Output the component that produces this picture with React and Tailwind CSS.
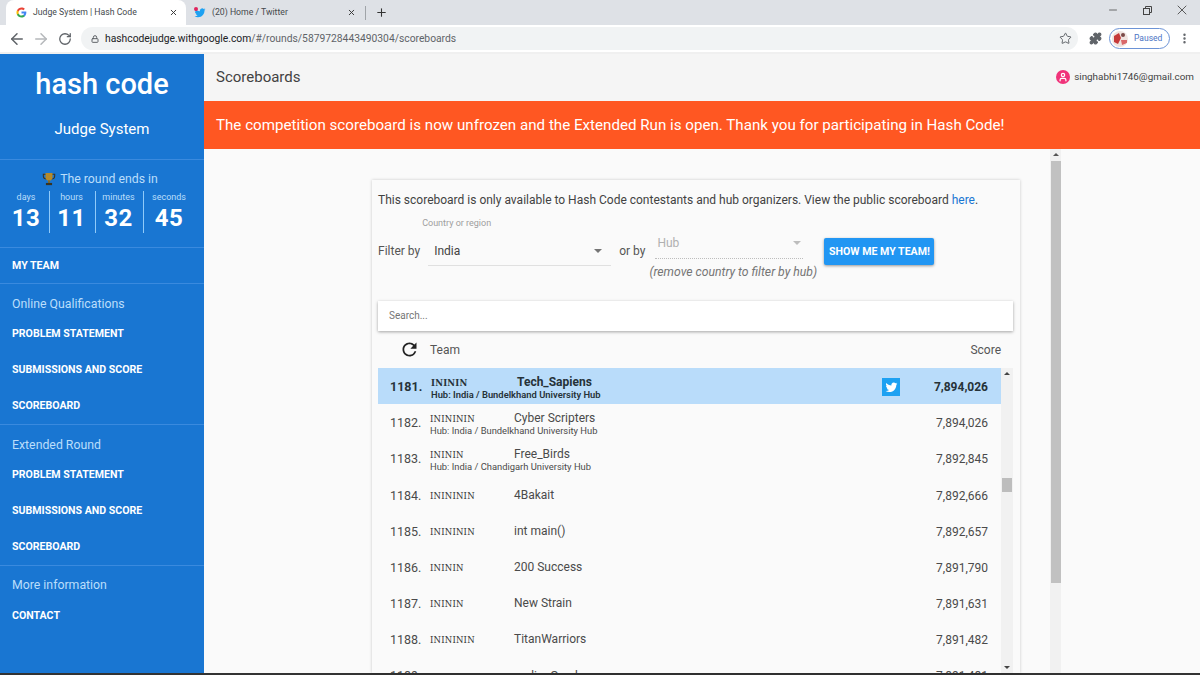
import { ArrowLeft, ArrowRight, RotateCw, Lock, Star, Puzzle, MoreVertical, X, Plus, Minus, User } from "lucide-react";

const font = { fontFamily: "Roboto, sans-serif" };

const rows = [
  { rank: "1181.", flags: "INININ", team: "Tech_Sapiens", hub: "Hub: India / Bundelkhand University Hub", score: "7,894,026", mine: true },
  { rank: "1182.", flags: "ININININ", team: "Cyber Scripters", hub: "Hub: India / Bundelkhand University Hub", score: "7,894,026" },
  { rank: "1183.", flags: "INININ", team: "Free_Birds", hub: "Hub: India / Chandigarh University Hub", score: "7,892,845" },
  { rank: "1184.", flags: "ININININ", team: "4Bakait", score: "7,892,666" },
  { rank: "1185.", flags: "ININININ", team: "int main()", score: "7,892,657" },
  { rank: "1186.", flags: "INININ", team: "200 Success", score: "7,891,790" },
  { rank: "1187.", flags: "INININ", team: "New Strain", score: "7,891,631" },
  { rank: "1188.", flags: "ININININ", team: "TitanWarriors", score: "7,891,482" },
  { rank: "1189.", flags: "", team: "codingGreek", score: "7,891,481" },
];

const countdown = [
  { label: "days", value: "13", w: "w-[47px]" },
  { label: "hours", value: "11", w: "w-[46px] pr-[2px]" },
  { label: "minutes", value: "32", w: "w-[48px] pr-[2px]" },
  { label: "seconds", value: "45", w: "w-[50px]" },
];

const TwitterBird = ({ className }) => (
  <svg viewBox="0 0 24 24" className={className} fill="currentColor">
    <path d="M23 4.900c-.8.4-1.700.6-2.600.7.900-.6 1.600-1.400 2-2.500-.9.5-1.900.9-2.900 1.100A4.500 4.500 0 0 0 11.800 8.300C8 8.100 4.600 6.300 2.400 3.500c-1.200 2.100-.6 4.700 1.400 6-.7 0-1.400-.2-2-.6 0 2.200 1.500 4.100 3.600 4.500-.7.200-1.400.2-2 .1.600 1.800 2.200 3.100 4.200 3.100A9.100 9.100 0 0 1 1 18.500 12.800 12.800 0 0 0 8 20.500c8.400 0 13.200-7.100 12.900-13.500.9-.6 1.600-1.300 2.100-2.100z" />
  </svg>
);

const GoogleG = () => (
  <svg viewBox="0 0 24 24" className="w-[11px] h-[11px] shrink-0">
    <path fill="#4285F4" d="M22.560 12.250c0-.78-.07-1.530-.2-2.250H12v4.260h5.920c-.26 1.370-1.040 2.530-2.210 3.310v2.770h3.570c2.080-1.920 3.280-4.740 3.280-8.090z" />
    <path fill="#34A853" d="M12 23c2.970 0 5.460-.98 7.280-2.660l-3.570-2.770c-.98.660-2.230 1.060-3.710 1.060-2.860 0-5.290-1.930-6.160-4.530H2.180v2.840C3.990 20.530 7.700 23 12 23z" />
    <path fill="#FBBC05" d="M5.840 14.090c-.22-.66-.35-1.360-.35-2.090s.13-1.430.35-2.090V7.070H2.180C1.430 8.550 1 10.220 1 12s.43 3.450 1.180 4.930l2.850-2.220.81-.62z" />
    <path fill="#EA4335" d="M12 5.380c1.620 0 3.060.56 4.210 1.640l3.150-3.150C17.450 2.090 14.970 1 12 1 7.700 1 3.990 3.470 2.180 7.070l3.660 2.840c.87-2.600 3.300-4.530 6.160-4.530z" />
  </svg>
);

const Trophy = () => (
  <svg viewBox="0 0 16 16" className="w-[14px] h-[14px]">
    <path d="M1.500 2.500h13v2c0 2-1.500 3.500-4 3.500h-5c-2.500 0-4-1.500-4-3.500z" fill="none" stroke="#3a3320" strokeWidth="1.200" />
    <path d="M4 1h8v5c0 2.500-1.500 4-4 4S4 8.500 4 6z" fill="#b58a2a" />
    <rect x="7" y="9.500" width="2" height="3" fill="#8a6a20" />
    <rect x="4.500" y="12.500" width="7" height="2.500" fill="#3a3320" />
  </svg>
);

const RestoreIcon = () => (
  <svg viewBox="0 0 9 9" className="w-[9px] h-[9px]" fill="none" stroke="#444" strokeWidth="1">
    <rect x="0.500" y="2.500" width="6" height="6" />
    <path d="M2.500 2.500v-2h6v6h-2" />
  </svg>
);

const RefreshIcon = () => (
  <svg viewBox="0 0 24 24" className="w-[21px] h-[21px] text-[#222]" fill="currentColor">
    <path d="M17.650 6.350A7.958 7.958 0 0 0 12 4c-4.420 0-7.990 3.580-7.990 8s3.570 8 7.990 8c3.730 0 6.840-2.550 7.730-6h-2.080A5.990 5.990 0 0 1 12 18c-3.310 0-6-2.690-6-6s2.690-6 6-6c1.660 0 3.140.69 4.220 1.780L13 11h7V4l-2.350 2.350z" />
  </svg>
);

const NavLink = ({ children }) => (
  <div className="h-[36px] flex items-center pl-3 text-[10.6px] font-bold text-white">{children}</div>
);

const NavHeading = ({ children, className }) => (
  <div className={`pl-3 text-[12.3px] leading-[18px] text-[#bbdefb] border-t border-[#3a8ade] ${className}`}>{children}</div>
);

const Sidebar = () => (
  <aside className="w-[204px] shrink-0 bg-[#1976d2] flex flex-col text-white">
    <div className="h-[106px] shrink-0 flex flex-col items-center border-b border-[#3a8ade]">
      <div className="mt-[10px] text-[29px] leading-[40px] font-medium">hash code</div>
      <div className="mt-[15px] text-[15px] leading-[20px]">Judge System</div>
    </div>
    <div className="h-[88px] shrink-0 flex flex-col items-center border-b border-[#3a8ade]">
      <div className="mt-[10px] pr-[4px] flex items-center gap-[4px] text-[12.3px] leading-[18px] text-[#bbdefb]">
        <Trophy />
        The round ends in
      </div>
      <div className="mt-[3px] self-start pl-[3px] flex">
        {countdown.map((c, i) => (
          <div key={c.label} className={`${c.w} h-[42px] flex flex-col items-center ${i < 3 ? "border-r border-[#90caf9]" : ""}`}>
            <div className="text-[9px] leading-[13px] text-[#bbdefb]">{c.label}</div>
            <div className="text-[24px] leading-[28px] font-bold tracking-[0.5px]">{c.value}</div>
          </div>
        ))}
      </div>
    </div>
    <div className="h-[35px] flex items-center pl-3 text-[10.6px] font-bold">MY TEAM</div>
    <NavHeading className="h-[33px] pt-[11px]">Online Qualifications</NavHeading>
    <NavLink>PROBLEM STATEMENT</NavLink>
    <NavLink>SUBMISSIONS AND SCORE</NavLink>
    <NavLink>SCOREBOARD</NavLink>
    <NavHeading className="h-[33px] pt-[11px]">Extended Round</NavHeading>
    <NavLink>PROBLEM STATEMENT</NavLink>
    <NavLink>SUBMISSIONS AND SCORE</NavLink>
    <NavLink>SCOREBOARD</NavLink>
    <NavHeading className="h-[33px] pt-[10px]">More information</NavHeading>
    <NavLink>CONTACT</NavLink>
  </aside>
);

const ChromeBar = () => (
  <div className="shrink-0">
    <div className="h-[25px] bg-[#dee1e6] flex items-center pl-[6px] text-[#45494d]">
      <div className="w-[180px] h-[25px] bg-white rounded-t-lg flex items-center pl-[10px] pr-[8px] text-[8.7px]">
        <GoogleG />
        <span className="ml-[6px] flex-1">Judge System | Hash Code</span>
        <X size={9} strokeWidth={2.500} className="text-[#333]" />
      </div>
      <div className="w-[173px] h-[25px] flex items-center pl-[8px] pr-[3px] text-[8.7px] relative">
        <TwitterBird className="w-[12px] h-[12px] text-[#1da1f2]" />
        <div className="absolute left-[8px] top-[7px] w-[4px] h-[4px] rounded-full bg-[#e0245e]" />
        <span className="ml-[6px] flex-1">(20) Home / Twitter</span>
        <X size={9} strokeWidth={2.500} className="text-[#333]" />
      </div>
      <div className="w-px h-[14px] ml-[6px] bg-[#a0a4a8]" />
      <Plus size={13} strokeWidth={2} className="ml-[9px] text-[#333]" />
      <div className="ml-auto flex items-center pr-[10px] pb-[5px] text-[#444]">
        <Minus size={12} strokeWidth={1.500} />
        <div className="ml-[24px]">
          <RestoreIcon />
        </div>
        <X size={16} strokeWidth={1.300} className="ml-[22px]" />
      </div>
    </div>
    <div className="h-[29px] bg-white flex items-center border-b-2 border-[#f0f0f0]">
      <ArrowLeft size={18} strokeWidth={2} className="ml-[8px] text-[#5f6368]" />
      <ArrowRight size={18} strokeWidth={2} className="ml-[6px] text-[#b5b8bb]" />
      <RotateCw size={14} strokeWidth={2.200} className="ml-[8px] text-[#5f6368]" />
      <div className="ml-[9px] w-[997px] h-[23px] rounded-full bg-[#f1f3f4] flex items-center pl-[10px] text-[10.3px] text-[#5f6368]">
        <Lock size={8} strokeWidth={3} className="text-[#5f6368]" />
        <span className="ml-[6px]">
          <span className="text-[#202124]">hashcodejudge.withgoogle.com</span>/#/rounds/5879728443490304/scoreboards
        </span>
        <Star size={13} strokeWidth={1.800} className="ml-auto mr-[6px] text-[#5f6368]" />
      </div>
      <Puzzle size={13} strokeWidth={2} className="ml-[11px] text-[#5f6368] fill-[#5f6368]" />
      <div className="ml-[7px] w-[61px] h-[21px] rounded-full border border-[#6c93d6] flex items-center pl-[2px] text-[8.5px] text-[#4b74c4]">
        <div className="w-[16px] h-[16px] rounded-full bg-[#efe3df] overflow-hidden flex items-center justify-center">
          <svg viewBox="0 0 16 16" className="w-[16px] h-[16px]">
            <path d="M2 5 7 2l2 5-3 6-4-2z" fill="#c6393a" />
            <path d="M9 9h6v3l-5 2z" fill="#d9686a" />
            <circle cx="11" cy="4" r="2" fill="#7a4a48" />
          </svg>
        </div>
        <span className="ml-[6px]">Paused</span>
      </div>
      <MoreVertical size={13} strokeWidth={2.500} className="ml-[8px] text-[#5f6368]" />
    </div>
  </div>
);

const Row = ({ row }) => (
  <div className={`h-[36px] flex items-center ${row.hub ? "pt-[2px]" : "pt-[4px]"} ${row.mine ? "bg-[#b9dcfa] font-medium text-[#263238]" : "text-[#4a4a4a]"}`}>
    <div className={`w-[52px] pl-[12px] text-[12.5px] shrink-0 ${row.mine ? "font-bold" : ""}`}>{row.rank}</div>
    <div className="flex-1 min-w-0">
      <div className="flex items-baseline leading-[13px]">
        <span className={`w-[84px] shrink-0 text-[8.5px] tracking-[0.2px] ${row.mine ? "font-bold ml-[1px]" : "text-[#333]"}`} style={{ fontFamily: "'DejaVu Serif', serif" }}>
          {row.flags}
        </span>
        <span className={`text-[12px] ${row.mine ? "ml-[2px] font-bold" : ""}`}>{row.team}</span>
      </div>
      {row.hub && <div className={`text-[9.4px] leading-[9px] ${row.mine ? "ml-[1px] font-semibold" : ""}`}>{row.hub}</div>}
    </div>
    {row.mine && (
      <div className="mr-[22px] w-[18px] h-[18px] bg-[#1da1f2] flex items-center justify-center text-white">
        <TwitterBird className="w-[13px] h-[13px]" />
      </div>
    )}
    <div className={`w-[66px] mr-[13px] text-right text-[12px] ${row.mine ? "font-bold" : ""}`}>{row.score}</div>
  </div>
);

const Scoreboard = () => (
  <div className="ml-[168px] mt-[31px] w-[648px] bg-[#fafafa] shadow-[0_0_3px_rgba(0,0,0,0.2)] px-[6px] pb-0 flex flex-col min-h-0 flex-1 overflow-hidden">
    <p className="mt-[12px] text-[12px] leading-[16px] text-[#424242]">
      This scoreboard is only available to Hash Code contestants and hub organizers. View the public scoreboard{" "}
      <span className="text-[#1976d2]">here</span>.
    </p>
    <div className="h-[93px] shrink-0 flex items-start text-[12px] text-[#555]">
      <span className="mt-[34px]">Filter by</span>
      <div className="ml-[8px] w-[183px] relative">
        <div className="absolute top-[9px] -left-[6px] text-[9px] text-[#9e9e9e] leading-[12px]">Country or region</div>
        <div className="mt-[24px] h-[34px] flex items-center pl-[6px] pt-[4px] border-b border-[#e0e0e0] text-[12px] text-[#424242]">
          India
          <div className="ml-auto mr-[9px] border-x-[4px] border-x-transparent border-t-[4px] border-t-[#757575]" />
        </div>
      </div>
      <span className="ml-[8px] mt-[34px]">or by</span>
      <div className="ml-[10px] w-[158px]">
        <div className="mt-[22px] h-[29px] w-[148px] flex items-center pl-[2px] pb-[2px] border-b border-dotted border-[#bdbdbd] text-[#b0b0b0]">
          Hub
          <div className="ml-auto mr-[2px] border-x-[4px] border-x-transparent border-t-[4px] border-t-[#bdbdbd]" />
        </div>
        <div className="-ml-[6px] mt-[6px] whitespace-nowrap italic text-[12.2px] text-[#757575] leading-[14px]">(remove country to filter by hub)</div>
      </div>
      <button className="ml-[11px] mt-[30px] w-[110px] h-[27px] shrink-0 bg-[#2196f3] text-white text-[10.6px] font-bold rounded-[2px] shadow-[0_1px_3px_rgba(0,0,0,0.4)]">
        SHOW ME MY TEAM!
      </button>
    </div>
    <div className="h-[30px] w-[635px] shrink-0 bg-white shadow-[0_1px_3px_rgba(0,0,0,0.35)] flex items-center pl-[11px] pb-[2px] text-[10px] text-[#757575]">
      Search...
    </div>
    <div className="h-[37px] w-[623px] shrink-0 flex items-center text-[12px] text-[#555]">
      <div className="ml-[21px]">
        <RefreshIcon />
      </div>
      <span className="ml-[10px]">Team</span>
      <span className="ml-auto">Score</span>
    </div>
    <div className="flex min-h-0 flex-1">
      <div className="w-[623px] overflow-hidden">
        {rows.map((row) => (
          <Row key={row.rank} row={row} />
        ))}
      </div>
      <div className="w-[12px] bg-[#f1f1f1] flex flex-col items-center py-[4px]">
        <div className="border-x-[3px] border-x-transparent border-b-[3px] border-b-[#444]" />
        <div className="mt-[103px] w-[10px] h-[14px] bg-[#bdbdbd]" />
        <div className="mt-auto border-x-[3px] border-x-transparent border-t-[3px] border-t-[#444]" />
      </div>
    </div>
  </div>
);

export default function App() {
  return (
    <div className="w-[1200px] h-[675px] flex flex-col overflow-hidden bg-[#fafafa]" style={font}>
      <ChromeBar />
      <div className="flex flex-1 min-h-0 border-b-2 border-[#333]">
        <Sidebar />
        <main className="flex-1 min-w-0 flex flex-col">
          <header className="h-[47px] shrink-0 bg-[#f5f5f5] flex items-center pl-[12px] pr-[6px]">
            <h1 className="text-[15px] text-[#424242]">Scoreboards</h1>
            <div className="ml-auto flex items-center gap-[4px] text-[9.85px] text-[#424242]">
              <div className="w-[14px] h-[14px] rounded-full bg-[#f0337a] flex items-center justify-center">
                <User size={10} strokeWidth={3} className="text-white" />
              </div>
              singhabhi1746@gmail.com
            </div>
          </header>
          <div className="h-[48px] shrink-0 bg-[#ff5722] flex items-center pl-[12px] text-[15.15px] text-white">
            The competition scoreboard is now unfrozen and the Extended Run is open. Thank you for participating in Hash Code!
          </div>
          <div className="flex flex-1 min-h-0">
            <div className="w-[846px] flex flex-col min-h-0">
              <Scoreboard />
            </div>
            <div className="w-[11px] bg-[#f1f1f1] flex flex-col items-center pt-[4px] pb-[4px]">
              <div className="border-x-[3px] border-x-transparent border-b-[3px] border-b-[#555]" />
              <div className="mt-[5px] w-[10px] h-[422px] bg-[#c1c1c1]" />
            </div>
          </div>
        </main>
      </div>
    </div>
  );
}
